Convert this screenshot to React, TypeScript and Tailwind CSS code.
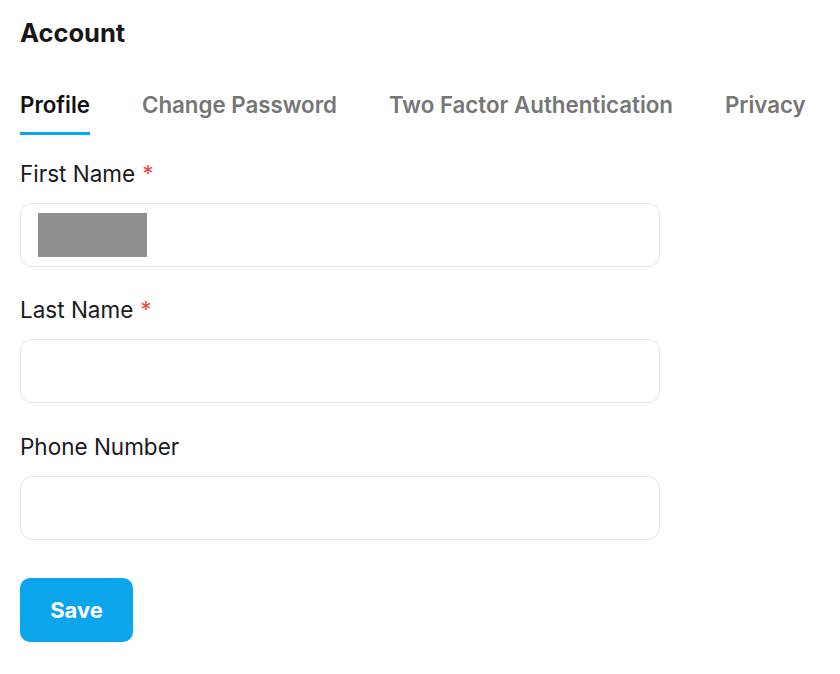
import { useState } from 'react';

const tabs = ['Profile', 'Change Password', 'Two Factor Authentication', 'Privacy'];

function Field({ label, required, className, children }: { label: string; required?: boolean; className?: string; children?: React.ReactNode }) {
  return (
    <div className={`flex flex-col gap-[15px] ${className ?? ''}`}>
      <label className="text-[22.5px] leading-[28px] text-[#1a1a1a]">
        {label}
        {required && <span className="ml-[7px] text-[#e5484d]">*</span>}
      </label>
      <div className="flex h-[64px] w-[640px] items-center rounded-[12px] border border-[#e4e4e4] bg-white px-[17px]">
        {children}
      </div>
    </div>
  );
}

export default function App() {
  const [active, setActive] = useState(0);

  return (
    <div className="min-h-screen bg-white px-[20px] pt-[17px] font-['Inter',sans-serif] text-[#171717]">
      <h1 className="text-[25.5px] font-bold leading-[32px]">Account</h1>

      <div className="mt-[42px] flex gap-[52px]">
        {tabs.map((t, i) => (
          <button
            key={t}
            onClick={() => setActive(i)}
            className={`relative pb-[16px] text-[22.3px] font-semibold leading-[28px] whitespace-nowrap ${
              i === active ? 'text-[#111]' : 'text-[#767676]'
            }`}
          >
            {t}
            {i === active && <span className="absolute bottom-0 left-0 h-[3px] w-full bg-[#03a9f4]" />}
          </button>
        ))}
      </div>

      <div className="mt-[25px] flex flex-col">
        <Field label="First Name" required>
          <div className="h-[44px] w-[109px] bg-[#8f8f8f]" />
        </Field>
        <Field label="Last Name" required className="mt-[29px]" />
        <Field label="Phone Number" className="mt-[30px]" />
      </div>

      <button className="mt-[38px] h-[64px] w-[113px] rounded-[10px] bg-[#0ba5ec] text-[22px] font-bold text-white">
        Save
      </button>
    </div>
  );
}
